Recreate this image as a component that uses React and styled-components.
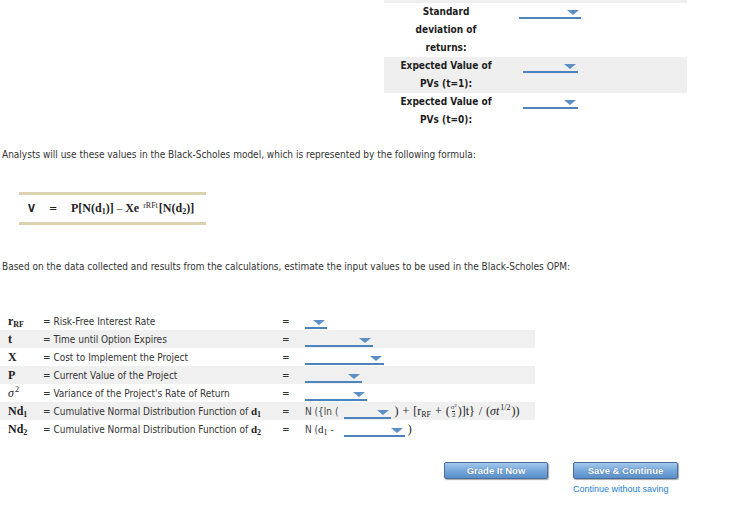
import { createGlobalStyle, styled } from "styled-components";

const GlobalStyle = createGlobalStyle`
  html, body {
    margin: 0;
    padding: 0;
    background: #fff;
  }
  body {
    font-family: "DejaVu Sans Condensed", "DejaVu Sans", sans-serif;
    color: #333;
  }
`;

const Page = styled.div`
  width: 736px;
  height: 505px;
  overflow: hidden;
`;

const TopTable = styled.div`
  margin-left: 384px;
  width: 303px;
  border-top: 3px solid #efefef;
`;

const TopRow = styled.div`
  display: grid;
  grid-template-columns: 124px 84px 1fr;
  background: ${(p) => (p.$shaded ? "#efefef" : "transparent")};
`;

const TopLabel = styled.div`
  text-align: center;
  font-weight: bold;
  font-size: 10px;
  line-height: 18px;
  color: #1d1d1d;
`;

const TopValue = styled.div`
  display: flex;
  justify-content: center;
  align-items: flex-start;
  padding-top: 1px;
`;

const Select = styled.span`
  display: inline-flex;
  justify-content: flex-end;
  align-items: flex-end;
  box-sizing: border-box;
  width: ${(p) => p.$w}px;
  height: 15px;
  border-bottom: 2px solid #4d84bd;
  padding: 0 2px 2px 0;
  vertical-align: middle;
`;

const Caret = styled.span`
  width: 0;
  height: 0;
  border-left: 6px solid transparent;
  border-right: 6px solid transparent;
  border-top: 5px solid #5b8fc6;
`;

const Para = styled.p`
  margin: ${(p) => p.$top}px 0 0;
  padding-left: 2px;
  font-size: 10px;
  line-height: 14px;
  color: #333;
`;

const FormulaBox = styled.div`
  margin: 30px 0 0 19px;
  width: 178px;
  height: 27px;
  border-top: 3px solid #dcd2b0;
  border-bottom: 3px solid #dcd2b0;
  display: flex;
  align-items: center;
  padding-left: 9px;
`;

const FormulaV = styled.span`
  font-weight: bold;
  font-size: 10px;
  color: #222;
  width: 21px;
`;

const FormulaEq = styled.span`
  font-size: 11px;
  color: #222;
  width: 22px;
`;

const Serif = styled.span`
  font-family: "Liberation Serif", "Times New Roman", serif;
  font-weight: ${(p) => (p.$bold ? "bold" : "normal")};
  font-style: ${(p) => (p.$italic ? "italic" : "normal")};
  font-size: ${(p) => p.$size || 12}px;
  color: #222;
`;

const Sup = styled.sup`
  font-size: ${(p) => p.$size || 8}px;
  font-weight: normal;
  vertical-align: ${(p) => p.$raise || 5}px;
  line-height: 0;
  margin: 0 1px;
`;

const Sub = styled.sub`
  font-size: ${(p) => p.$size || 8}px;
  vertical-align: -2px;
  line-height: 0;
`;

const Op = styled.span`
  margin: 0 4px;
`;

const VarTable = styled.div`
  margin-top: 38px;
  width: 535px;
`;

const VarRow = styled.div`
  display: grid;
  grid-template-columns: 43px 232px 30px 1fr;
  align-items: center;
  height: 18px;
  background: ${(p) => (p.$shaded ? "#f0f0f0" : "transparent")};
`;

const Symbol = styled.div`
  padding-left: 8px;
  font-family: "Liberation Serif", "Times New Roman", serif;
  font-weight: bold;
  font-size: 12px;
  color: #222;
`;

const Desc = styled.div`
  font-size: 10px;
  color: #333;
  white-space: nowrap;
`;

const Equals = styled.div`
  padding-left: 7px;
  font-size: 10px;
  color: #333;
`;

const Value = styled.div`
  display: flex;
  align-items: center;
  white-space: nowrap;
`;

const Plain = styled.span`
  font-size: 10px;
  color: #444;
  margin-right: ${(p) => p.$gap || 4}px;
`;

const Frac = styled.span`
  display: inline-flex;
  flex-direction: column;
  align-items: center;
  font-family: "Liberation Serif", serif;
  font-size: 7px;
  line-height: 7px;
  margin: 0 1px;
  span + span {
    border-top: 1px solid #333;
  }
`;

const Footer = styled.div`
  margin: 24px 0 0 444px;
  display: flex;
  gap: 25px;
`;

const FooterCol = styled.div`
  display: flex;
  flex-direction: column;
  align-items: flex-start;
  gap: 5px;
`;

const Button = styled.button`
  width: ${(p) => p.$w}px;
  height: 17px;
  padding: 0;
  border: 1px solid #4a6e9a;
  border-radius: 2px;
  background: linear-gradient(#a3c8ec, #77a8db 50%, #5a8fca);
  color: #fff;
  font: bold 9.5px "Liberation Sans", Arial, sans-serif;
  text-shadow: 0 0 1px #3b5f8a;
  box-shadow: 1px 1px 1px rgba(0, 0, 0, 0.35);
  cursor: pointer;
`;

const Link = styled.a`
  font: 9px "Liberation Sans", Arial, sans-serif;
  color: #1f7fd0;
  text-decoration: none;
`;

const Drop = ({ w }) => (
  <Select $w={w}>
    <Caret />
  </Select>
);

const topRows = [
  { label: ["Standard", "deviation of", "returns:"], w: 62 },
  { label: ["Expected Value of", "PVs (t=1):"], w: 55, shaded: true },
  { label: ["Expected Value of", "PVs (t=0):"], w: 55 },
];

export default function App() {
  return (
    <Page>
      <GlobalStyle />

      <TopTable>
        {topRows.map((r, i) => (
          <TopRow key={i} $shaded={r.shaded}>
            <TopLabel>
              {r.label.map((l) => (
                <div key={l}>{l}</div>
              ))}
            </TopLabel>
            <TopValue>
              <Drop w={r.w} />
            </TopValue>
            <div />
          </TopRow>
        ))}
      </TopTable>

      <Para $top={19}>
        Analysts will use these values in the Black-Scholes model, which is represented by the following formula:
      </Para>

      <FormulaBox>
        <FormulaV>V</FormulaV>
        <FormulaEq>=</FormulaEq>
        <Serif $bold $size={12}>
          P[N(d<Sub>1</Sub>)] <Serif $size={11}>–</Serif> Xe <Sup $raise={4}>rRFt</Sup>[N(d<Sub>2</Sub>)]
        </Serif>
      </FormulaBox>

      <Para $top={35}>
        Based on the data collected and results from the calculations, estimate the input values to be used in the Black-Scholes OPM:
      </Para>

      <VarTable>
        <VarRow>
          <Symbol>
            r<Sub>RF</Sub>
          </Symbol>
          <Desc>= Risk-Free Interest Rate</Desc>
          <Equals>=</Equals>
          <Value>
            <Drop w={22} />
          </Value>
        </VarRow>
        <VarRow $shaded>
          <Symbol>t</Symbol>
          <Desc>= Time until Option Expires</Desc>
          <Equals>=</Equals>
          <Value>
            <Drop w={68} />
          </Value>
        </VarRow>
        <VarRow>
          <Symbol>X</Symbol>
          <Desc>= Cost to Implement the Project</Desc>
          <Equals>=</Equals>
          <Value>
            <Drop w={79} />
          </Value>
        </VarRow>
        <VarRow $shaded>
          <Symbol>P</Symbol>
          <Desc>= Current Value of the Project</Desc>
          <Equals>=</Equals>
          <Value>
            <Drop w={57} />
          </Value>
        </VarRow>
        <VarRow>
          <Symbol>
            <Serif $italic $size={12}>σ</Serif>
            <Sup>2</Sup>
          </Symbol>
          <Desc>= Variance of the Project's Rate of Return</Desc>
          <Equals>=</Equals>
          <Value>
            <Drop w={62} />
          </Value>
        </VarRow>
        <VarRow $shaded>
          <Symbol>
            Nd<Sub>1</Sub>
          </Symbol>
          <Desc>
            = Cumulative Normal Distribution Function of <Serif $bold $size={11}>d<Sub>1</Sub></Serif>
          </Desc>
          <Equals>=</Equals>
          <Value>
            <Plain $gap={6}>N ({"{"}ln (</Plain>
            <Drop w={47} />
            <Serif $size={12}>
              &nbsp;)<Op>+</Op>[r<Sub $size={8}>RF</Sub>
              <Op>+</Op>(
            </Serif>
            <Frac>
              <span>σ²</span>
              <span>2</span>
            </Frac>
            <Serif $size={12}>
              )]t{"}"}<Op>/</Op>(<i>σt</i>
              <Sup $size={8}>1/2</Sup>))
            </Serif>
          </Value>
        </VarRow>
        <VarRow>
          <Symbol>
            Nd<Sub>2</Sub>
          </Symbol>
          <Desc>
            = Cumulative Normal Distribution Function of <Serif $bold $size={11}>d<Sub>2</Sub></Serif>
          </Desc>
          <Equals>=</Equals>
          <Value>
            <Plain $gap={10}>
              N (<Serif $size={11}>d<Sub>1</Sub></Serif> -
            </Plain>
            <Drop w={61} />
            <Serif $size={12}>&nbsp;)</Serif>
          </Value>
        </VarRow>
      </VarTable>

      <Footer>
        <FooterCol>
          <Button $w={104}>Grade It Now</Button>
        </FooterCol>
        <FooterCol>
          <Button $w={105}>Save &amp; Continue</Button>
          <Link href="#">Continue without saving</Link>
        </FooterCol>
      </Footer>
    </Page>
  );
}
